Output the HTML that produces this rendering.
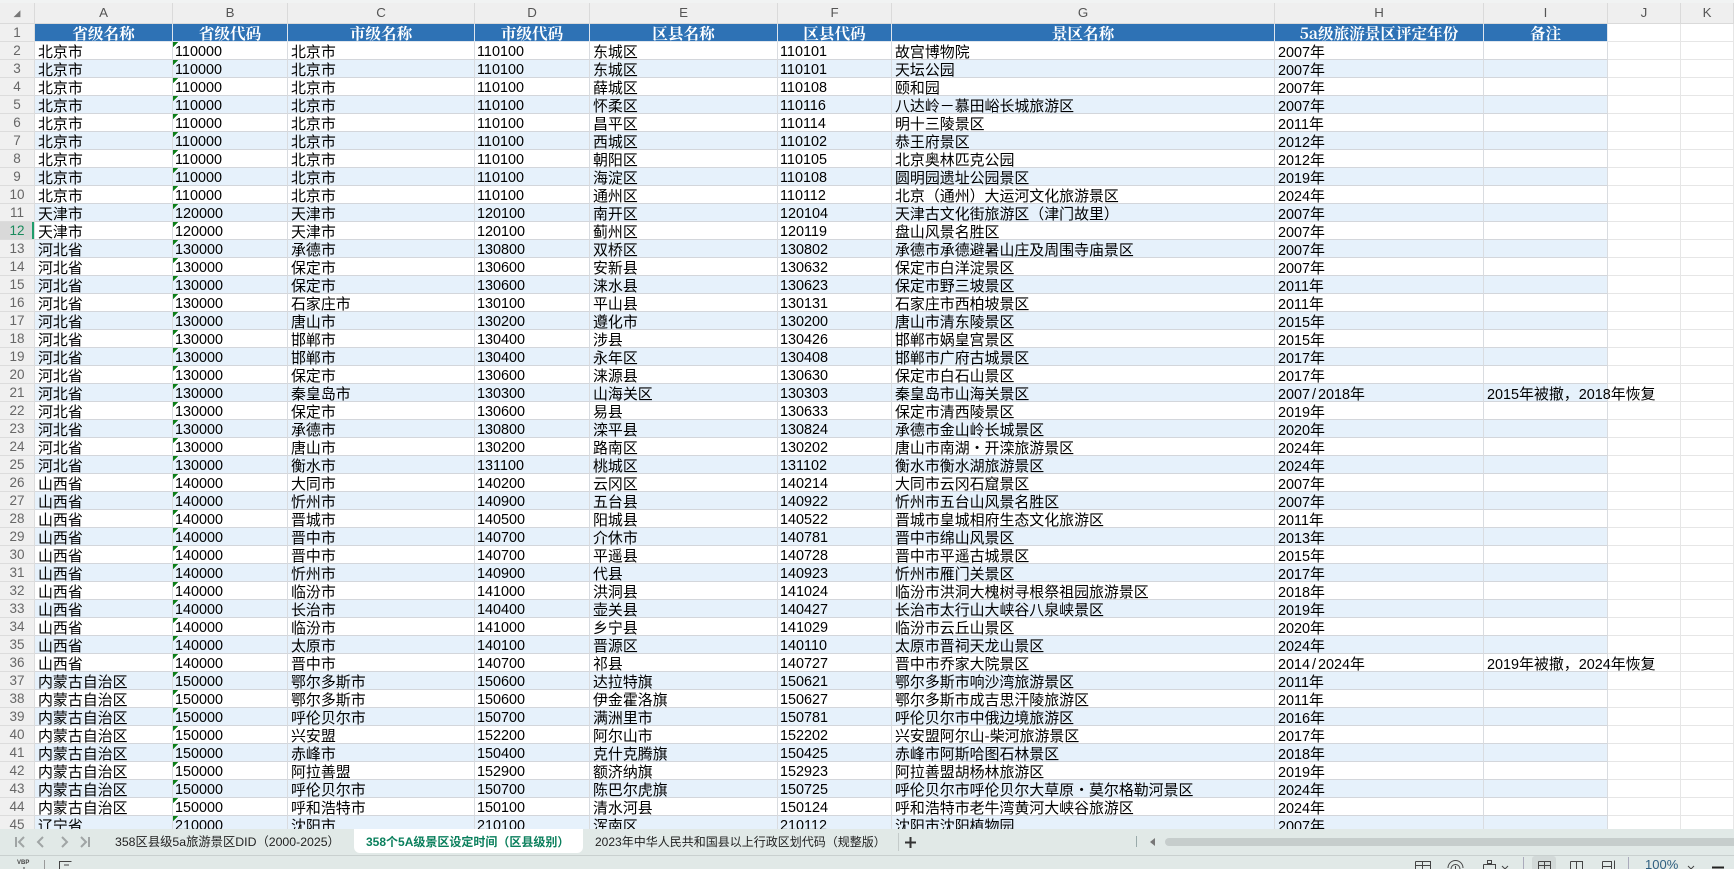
<!DOCTYPE html>
<html lang="zh"><head><meta charset="utf-8"><title>358个5A级景区设定时间</title>
<style>
html,body{margin:0;padding:0;width:1734px;height:869px;overflow:hidden;background:#fff}
#wrap{position:absolute;left:0;top:0;width:1734px;height:829px;overflow:hidden;background:#f1f3f3}
table{position:absolute;left:0;top:3px;border-collapse:separate;border-spacing:0;table-layout:fixed;width:1734px;font:14.93px "WenQuanYi Zen Hei","Noto Sans CJK SC",sans-serif;color:#000}
td{box-sizing:border-box;height:18px;line-height:12px;padding:4px 0 0 3px;white-space:nowrap;overflow:visible;border-right:1px solid #d9dce0;border-bottom:1px solid #d3d6db;background:#fff;vertical-align:top}
td:nth-child(1){background:#f0f0f0;color:#666;text-align:center;padding:0;font:13.5px/17px "Liberation Sans",sans-serif;border-color:#dcdcdc}
td:nth-child(11),td:nth-child(12){border-color:#e6e6e6}
tr.a td:nth-child(n+2):nth-child(-n+10){background:#e6f1fb}
td:nth-child(3){background-image:linear-gradient(135deg,#0c7f18 3.6px,transparent 3.7px)!important;background-repeat:no-repeat;background-size:6px 6px}
tr.c td{height:21px;background:#efefef!important;background-image:none!important;color:#555;text-align:center;padding:0;font:13.3px/20px "Liberation Sans",sans-serif;border-color:#dadada}
tr.h td{background:#2e72b5;background-image:none!important;color:#fff;text-align:center;padding:1px 0 0;font:bold 15.6px/16px "Noto Serif CJK SC","Noto Sans CJK SC",serif;border-color:#dfe6ee}
tr.h td:nth-child(1){background:#f0f0f0;color:#666;padding:0;font:13.5px/17px "Liberation Sans",sans-serif;border-color:#dcdcdc}
tr.h td:nth-child(11),tr.h td:nth-child(12){background:#fff;border-color:#e6e6e6}
tr.s td:nth-child(1){background:#d9d9d9;color:#1a8a5c;box-shadow:inset -2px 0 0 #1f9d6b}
i{font:14.4px/12px "Liberation Sans",sans-serif}
b{display:inline-block;width:8px;font-weight:normal;text-align:center}
.n{font:14.4px/12px "Liberation Sans",sans-serif;padding-left:2px}
#bar{position:absolute;left:0;top:829px;width:1734px;height:40px;background:#e1e9e7}
#bar div,#bar span,#bar svg{position:absolute}
.t{font:12px/16px "Liberation Sans","Noto Sans CJK SC",sans-serif;color:#222;white-space:nowrap;top:5px}
</style></head><body>
<div id="wrap"><table>
<colgroup><col style="width:35px"><col style="width:138px"><col style="width:115px"><col style="width:187px"><col style="width:115px"><col style="width:188px"><col style="width:114px"><col style="width:383px"><col style="width:209px"><col style="width:124px"><col style="width:73px"><col style="width:53px"></colgroup>
<tr class="c"><td style="font-size:9px;color:#777">◢<td>A<td>B<td>C<td>D<td>E<td>F<td>G<td>H<td>I<td>J<td>K</tr>
<tr class="h"><td>1<td>省级名称<td>省级代码<td>市级名称<td>市级代码<td>区县名称<td>区县代码<td>景区名称<td>5a级旅游景区评定年份<td>备注<td><td></tr>
<tr><td>2<td>北京市<td class="n">110000<td>北京市<td class="n">110100<td>东城区<td class="n">110101<td>故宫博物院<td><i>2007</i>年<td><td><td></tr>
<tr class="a"><td>3<td>北京市<td class="n">110000<td>北京市<td class="n">110100<td>东城区<td class="n">110101<td>天坛公园<td><i>2007</i>年<td><td><td></tr>
<tr><td>4<td>北京市<td class="n">110000<td>北京市<td class="n">110100<td>薛城区<td class="n">110108<td>颐和园<td><i>2007</i>年<td><td><td></tr>
<tr class="a"><td>5<td>北京市<td class="n">110000<td>北京市<td class="n">110100<td>怀柔区<td class="n">110116<td>八达岭－慕田峪长城旅游区<td><i>2007</i>年<td><td><td></tr>
<tr><td>6<td>北京市<td class="n">110000<td>北京市<td class="n">110100<td>昌平区<td class="n">110114<td>明十三陵景区<td><i>2011</i>年<td><td><td></tr>
<tr class="a"><td>7<td>北京市<td class="n">110000<td>北京市<td class="n">110100<td>西城区<td class="n">110102<td>恭王府景区<td><i>2012</i>年<td><td><td></tr>
<tr><td>8<td>北京市<td class="n">110000<td>北京市<td class="n">110100<td>朝阳区<td class="n">110105<td>北京奥林匹克公园<td><i>2012</i>年<td><td><td></tr>
<tr class="a"><td>9<td>北京市<td class="n">110000<td>北京市<td class="n">110100<td>海淀区<td class="n">110108<td>圆明园遗址公园景区<td><i>2019</i>年<td><td><td></tr>
<tr><td>10<td>北京市<td class="n">110000<td>北京市<td class="n">110100<td>通州区<td class="n">110112<td>北京（通州）大运河文化旅游景区<td><i>2024</i>年<td><td><td></tr>
<tr class="a"><td>11<td>天津市<td class="n">120000<td>天津市<td class="n">120100<td>南开区<td class="n">120104<td>天津古文化街旅游区（津门故里）<td><i>2007</i>年<td><td><td></tr>
<tr class="s"><td>12<td>天津市<td class="n">120000<td>天津市<td class="n">120100<td>蓟州区<td class="n">120119<td>盘山风景名胜区<td><i>2007</i>年<td><td><td></tr>
<tr class="a"><td>13<td>河北省<td class="n">130000<td>承德市<td class="n">130800<td>双桥区<td class="n">130802<td>承德市承德避暑山庄及周围寺庙景区<td><i>2007</i>年<td><td><td></tr>
<tr><td>14<td>河北省<td class="n">130000<td>保定市<td class="n">130600<td>安新县<td class="n">130632<td>保定市白洋淀景区<td><i>2007</i>年<td><td><td></tr>
<tr class="a"><td>15<td>河北省<td class="n">130000<td>保定市<td class="n">130600<td>涞水县<td class="n">130623<td>保定市野三坡景区<td><i>2011</i>年<td><td><td></tr>
<tr><td>16<td>河北省<td class="n">130000<td>石家庄市<td class="n">130100<td>平山县<td class="n">130131<td>石家庄市西柏坡景区<td><i>2011</i>年<td><td><td></tr>
<tr class="a"><td>17<td>河北省<td class="n">130000<td>唐山市<td class="n">130200<td>遵化市<td class="n">130200<td>唐山市清东陵景区<td><i>2015</i>年<td><td><td></tr>
<tr><td>18<td>河北省<td class="n">130000<td>邯郸市<td class="n">130400<td>涉县<td class="n">130426<td>邯郸市娲皇宫景区<td><i>2015</i>年<td><td><td></tr>
<tr class="a"><td>19<td>河北省<td class="n">130000<td>邯郸市<td class="n">130400<td>永年区<td class="n">130408<td>邯郸市广府古城景区<td><i>2017</i>年<td><td><td></tr>
<tr><td>20<td>河北省<td class="n">130000<td>保定市<td class="n">130600<td>涞源县<td class="n">130630<td>保定市白石山景区<td><i>2017</i>年<td><td><td></tr>
<tr class="a"><td>21<td>河北省<td class="n">130000<td>秦皇岛市<td class="n">130300<td>山海关区<td class="n">130303<td>秦皇岛市山海关景区<td><i>2007<b>/</b>2018</i>年<td><i>2015</i>年被撤，<i>2018</i>年恢复<td><td></tr>
<tr><td>22<td>河北省<td class="n">130000<td>保定市<td class="n">130600<td>易县<td class="n">130633<td>保定市清西陵景区<td><i>2019</i>年<td><td><td></tr>
<tr class="a"><td>23<td>河北省<td class="n">130000<td>承德市<td class="n">130800<td>滦平县<td class="n">130824<td>承德市金山岭长城景区<td><i>2020</i>年<td><td><td></tr>
<tr><td>24<td>河北省<td class="n">130000<td>唐山市<td class="n">130200<td>路南区<td class="n">130202<td>唐山市南湖·开滦旅游景区<td><i>2024</i>年<td><td><td></tr>
<tr class="a"><td>25<td>河北省<td class="n">130000<td>衡水市<td class="n">131100<td>桃城区<td class="n">131102<td>衡水市衡水湖旅游景区<td><i>2024</i>年<td><td><td></tr>
<tr><td>26<td>山西省<td class="n">140000<td>大同市<td class="n">140200<td>云冈区<td class="n">140214<td>大同市云冈石窟景区<td><i>2007</i>年<td><td><td></tr>
<tr class="a"><td>27<td>山西省<td class="n">140000<td>忻州市<td class="n">140900<td>五台县<td class="n">140922<td>忻州市五台山风景名胜区<td><i>2007</i>年<td><td><td></tr>
<tr><td>28<td>山西省<td class="n">140000<td>晋城市<td class="n">140500<td>阳城县<td class="n">140522<td>晋城市皇城相府生态文化旅游区<td><i>2011</i>年<td><td><td></tr>
<tr class="a"><td>29<td>山西省<td class="n">140000<td>晋中市<td class="n">140700<td>介休市<td class="n">140781<td>晋中市绵山风景区<td><i>2013</i>年<td><td><td></tr>
<tr><td>30<td>山西省<td class="n">140000<td>晋中市<td class="n">140700<td>平遥县<td class="n">140728<td>晋中市平遥古城景区<td><i>2015</i>年<td><td><td></tr>
<tr class="a"><td>31<td>山西省<td class="n">140000<td>忻州市<td class="n">140900<td>代县<td class="n">140923<td>忻州市雁门关景区<td><i>2017</i>年<td><td><td></tr>
<tr><td>32<td>山西省<td class="n">140000<td>临汾市<td class="n">141000<td>洪洞县<td class="n">141024<td>临汾市洪洞大槐树寻根祭祖园旅游景区<td><i>2018</i>年<td><td><td></tr>
<tr class="a"><td>33<td>山西省<td class="n">140000<td>长治市<td class="n">140400<td>壶关县<td class="n">140427<td>长治市太行山大峡谷八泉峡景区<td><i>2019</i>年<td><td><td></tr>
<tr><td>34<td>山西省<td class="n">140000<td>临汾市<td class="n">141000<td>乡宁县<td class="n">141029<td>临汾市云丘山景区<td><i>2020</i>年<td><td><td></tr>
<tr class="a"><td>35<td>山西省<td class="n">140000<td>太原市<td class="n">140100<td>晋源区<td class="n">140110<td>太原市晋祠天龙山景区<td><i>2024</i>年<td><td><td></tr>
<tr><td>36<td>山西省<td class="n">140000<td>晋中市<td class="n">140700<td>祁县<td class="n">140727<td>晋中市乔家大院景区<td><i>2014<b>/</b>2024</i>年<td><i>2019</i>年被撤，<i>2024</i>年恢复<td><td></tr>
<tr class="a"><td>37<td>内蒙古自治区<td class="n">150000<td>鄂尔多斯市<td class="n">150600<td>达拉特旗<td class="n">150621<td>鄂尔多斯市响沙湾旅游景区<td><i>2011</i>年<td><td><td></tr>
<tr><td>38<td>内蒙古自治区<td class="n">150000<td>鄂尔多斯市<td class="n">150600<td>伊金霍洛旗<td class="n">150627<td>鄂尔多斯市成吉思汗陵旅游区<td><i>2011</i>年<td><td><td></tr>
<tr class="a"><td>39<td>内蒙古自治区<td class="n">150000<td>呼伦贝尔市<td class="n">150700<td>满洲里市<td class="n">150781<td>呼伦贝尔市中俄边境旅游区<td><i>2016</i>年<td><td><td></tr>
<tr><td>40<td>内蒙古自治区<td class="n">150000<td>兴安盟<td class="n">152200<td>阿尔山市<td class="n">152202<td>兴安盟阿尔山-柴河旅游景区<td><i>2017</i>年<td><td><td></tr>
<tr class="a"><td>41<td>内蒙古自治区<td class="n">150000<td>赤峰市<td class="n">150400<td>克什克腾旗<td class="n">150425<td>赤峰市阿斯哈图石林景区<td><i>2018</i>年<td><td><td></tr>
<tr><td>42<td>内蒙古自治区<td class="n">150000<td>阿拉善盟<td class="n">152900<td>额济纳旗<td class="n">152923<td>阿拉善盟胡杨林旅游区<td><i>2019</i>年<td><td><td></tr>
<tr class="a"><td>43<td>内蒙古自治区<td class="n">150000<td>呼伦贝尔市<td class="n">150700<td>陈巴尔虎旗<td class="n">150725<td>呼伦贝尔市呼伦贝尔大草原·莫尔格勒河景区<td><i>2024</i>年<td><td><td></tr>
<tr><td>44<td>内蒙古自治区<td class="n">150000<td>呼和浩特市<td class="n">150100<td>清水河县<td class="n">150124<td>呼和浩特市老牛湾黄河大峡谷旅游区<td><i>2024</i>年<td><td><td></tr>
<tr class="a"><td>45<td>辽宁省<td class="n">210000<td>沈阳市<td class="n">210100<td>浑南区<td class="n">210112<td>沈阳市沈阳植物园<td><i>2007</i>年<td><td><td></tr>
</table></div>
<div id="bar">
<svg style="left:0;top:0" width="110" height="26" fill="none" stroke="#a0a5a5" stroke-width="2"><path d="M16 8v10M24 8l-5 5 5 5M43 8l-5 5 5 5M62 8l5 5-5 5M81 8l5 5-5 5M89 8v10"/></svg>
<span class="t" style="left:115px;font-size:12.3px">358区县级5a旅游景区DID（2000-2025）</span>
<div style="left:354px;top:0;width:229px;height:24px;background:#fff;border-radius:0 0 6px 6px"></div>
<span class="t" style="left:366px;color:#0a7f5c;font-weight:bold">358个5A级景区设定时间（区县级别）</span>
<span class="t" style="left:595px">2023年中华人民共和国县以上行政区划代码（规整版）</span>
<div style="left:898px;top:4px;width:1px;height:18px;background:#c4cbca"></div>
<svg style="left:904px;top:7px" width="13" height="13" stroke="#333" stroke-width="2"><path d="M1 6.500H12M6.500 1V12"/></svg>
<div style="left:1136px;top:7px;width:1px;height:11px;background:#9aa"></div>
<svg style="left:1150px;top:9px" width="6" height="8" fill="#777"><path d="M5 0V8L0 4Z"/></svg>
<div style="left:1165px;top:9px;width:569px;height:8px;background:#c6cdcc;border-radius:4px 0 0 4px"></div>
<div style="left:0;top:26px;width:1734px;height:1px;background:#c9d0cf"></div>
<div style="left:1532px;top:27px;width:24px;height:13px;background:#d2d9d8;border-radius:3px 3px 0 0"></div>
<span style="left:17px;top:31px;font:bold 6px/7px 'Liberation Sans',sans-serif;color:#444">VBP</span>
<svg style="left:0;top:27px" width="1734" height="13" fill="none" stroke="#444" stroke-width="1">
<path d="M24 11v2"/>
<path d="M44.500 4v9" stroke="#999"/>
<path d="M59.500 13V5.500h12M64 9h5"/>
<path d="M1415.500 5.500h15v8M1415.500 5.500v8M1415.500 9.500h15M1422.500 5.500v8"/>
<path d="M1448 12a7 7 0 0 1 15 0M1451 13a4.500 4.500 0 0 1 9 0M1455.500 10v3"/>
<path d="M1487.500 4.500h4v3h-4zM1483.500 8.500h12v5M1483.500 8.500v5"/>
<path d="M1502 10l3 3 3-3M1688 10l3 3 3-3"/>
<path d="M1523.500 1v12M1628.500 1v12" stroke="#aab"/>
<path d="M1538.500 5.500h12v8M1538.500 5.500v8M1538.500 9.500h12M1544.500 5.500v8"/>
<path d="M1570.500 5.500h12v8M1570.500 5.500v8M1576.500 5.500v8"/>
<path d="M1602.500 5.500h9v8M1602.500 5.500v8M1602.500 10.500h9M1614.500 4.500v9"/>
<path d="M1712 11.500h12" stroke-width="2" stroke="#222"/>
</svg>
<span class="t" style="left:1645px;top:28px;font-size:13px;color:#2f5f80">100%</span>
</div>
</body></html>
